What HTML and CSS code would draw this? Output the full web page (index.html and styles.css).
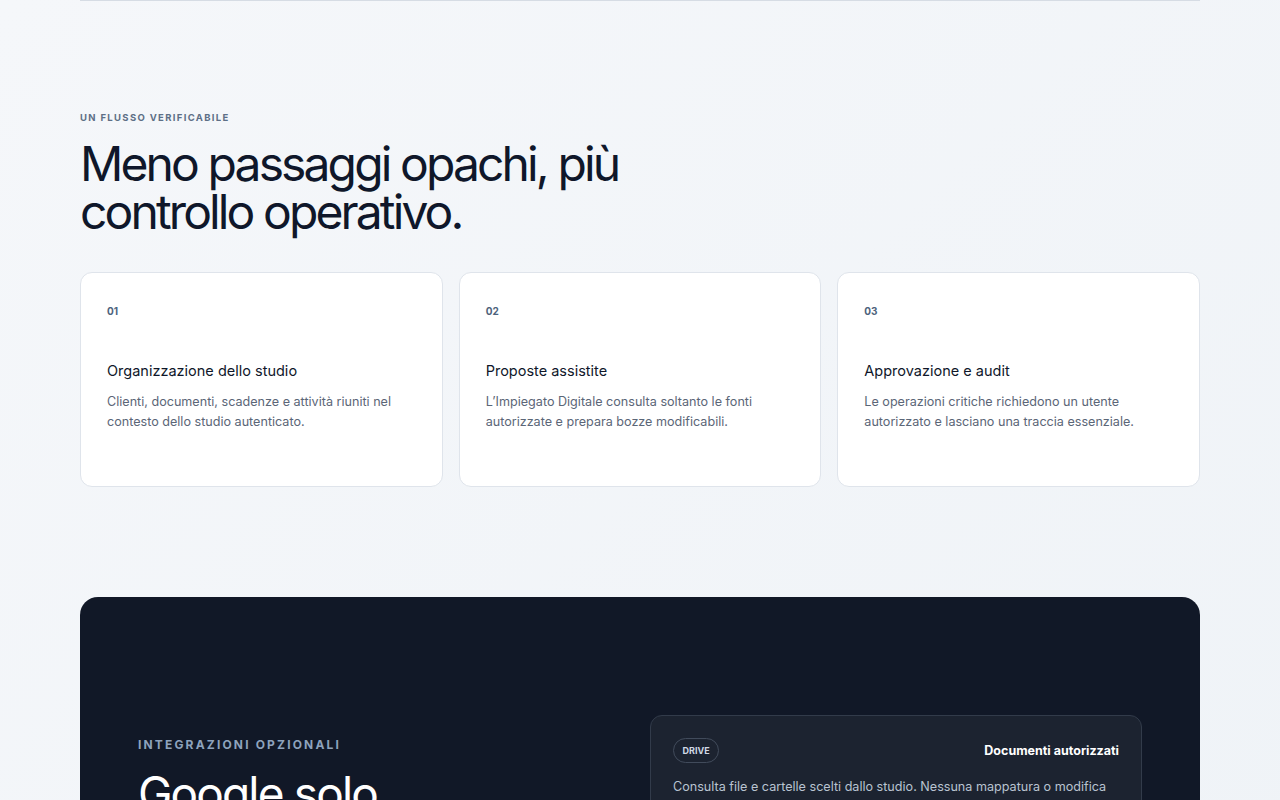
FILE: index.html
```html
<!DOCTYPE html>
<html lang="it">

<head>
    <meta charset="UTF-8">
    <meta name="viewport" content="width=device-width, initial-scale=1.0">
    <title>Impiegato Digitale</title>
    <link rel="stylesheet" href="styles.css">
</head>

<body>
    <div class="wrap">
        <section class="flow">
            <p class="eyebrow">Un flusso verificabile</p>
            <h2 class="flow-title">Meno passaggi opachi, più controllo operativo.</h2>

            <div class="steps">
                <article class="step">
                    <span class="step-num">01</span>
                    <h3>Organizzazione dello studio</h3>
                    <p>Clienti, documenti, scadenze e attività riuniti nel contesto dello studio autenticato.</p>
                </article>
                <article class="step">
                    <span class="step-num">02</span>
                    <h3>Proposte assistite</h3>
                    <p>L’Impiegato Digitale consulta soltanto le fonti autorizzate e prepara bozze modificabili.</p>
                </article>
                <article class="step">
                    <span class="step-num">03</span>
                    <h3>Approvazione e audit</h3>
                    <p>Le operazioni critiche richiedono un utente autorizzato e lasciano una traccia essenziale.</p>
                </article>
            </div>
        </section>

        <section class="integrations">
            <div class="integrations-intro">
                <p class="eyebrow eyebrow-dark">Integrazioni opzionali</p>
                <h2>Google solo quando serve.</h2>
            </div>

            <div class="integrations-list">
                <div class="integration">
                    <div class="integration-head">
                        <span class="pill">DRIVE</span>
                        <strong>Documenti autorizzati</strong>
                    </div>
                    <p>Consulta file e cartelle scelti dallo studio. Nessuna mappatura o modifica automatica senza conferma.</p>
                </div>
            </div>
        </section>
    </div>
</body>

</html>
```

FILE: styles.css
```css
body {
    margin: 0;
    font-family: 'Inter', 'Noto Sans', sans-serif;
    background: linear-gradient(135deg, #f5f7fa 0%, #eff3f7 100%);
    color: #0f172a;
    min-height: 100vh;
}

.wrap {
    max-width: 1120px;
    margin: 0 auto;
    border-top: 1px solid #d6dce4;
}

.eyebrow {
    margin: 0;
    font-size: 9.5px;
    line-height: 16px;
    font-weight: 700;
    letter-spacing: 0.14em;
    text-transform: uppercase;
    color: #5d6f86;
}

.flow {
    padding-top: 109px;
}

.flow-title {
    margin: 14px 0 0;
    max-width: 600px;
    font-size: 48px;
    line-height: 48px;
    font-weight: 400;
    letter-spacing: -0.06em;
    color: #0f172a;
}

.steps {
    display: grid;
    grid-template-columns: repeat(3, 1fr);
    gap: 16px;
    margin-top: 36px;
}

.step {
    background: #ffffff;
    border: 1px solid #dfe4eb;
    border-radius: 12px;
    padding: 28px 26px;
    min-height: 157px;
}

.step-num {
    display: block;
    font-size: 10px;
    line-height: 20px;
    font-weight: 700;
    color: #4d627c;
}

.step h3 {
    margin: 39px 0 0;
    font-size: 14.5px;
    line-height: 22px;
    font-weight: 400;
    color: #0f172a;
}

.step p {
    margin: 10px 0 0;
    font-size: 12.6px;
    line-height: 20px;
    color: #5b6677;
}

.integrations {
    margin-top: 110px;
    background: #111827;
    border-radius: 18px;
    padding: 118px 58px 80px;
    display: grid;
    grid-template-columns: 1fr 1fr;
    gap: 20px;
    align-items: start;
    color: #ffffff;
}

.integrations-intro {
    padding-top: 22px;
}

.eyebrow-dark {
    font-size: 12px;
    letter-spacing: 0.18em;
    color: #8ea3bd;
}

.integrations h2 {
    margin: 16px 0 0;
    max-width: 340px;
    font-size: 46px;
    line-height: 48px;
    font-weight: 400;
    letter-spacing: -0.04em;
}

.integration {
    background: #1c2330;
    border: 1px solid #323b4a;
    border-radius: 12px;
    padding: 22px 22px 24px 22px;
}

.integration-head {
    display: flex;
    justify-content: space-between;
    align-items: center;
}

.pill {
    border: 1px solid #414b5b;
    border-radius: 999px;
    padding: 6px 8.5px;
    font-size: 9px;
    line-height: 11px;
    font-weight: 700;
    color: #cfd8e4;
}

.integration-head strong {
    font-size: 12.5px;
    font-weight: 700;
}

.integration p {
    margin: 14px 0 0;
    font-size: 12.6px;
    line-height: 20px;
    color: #b9c3d1;
}
```
